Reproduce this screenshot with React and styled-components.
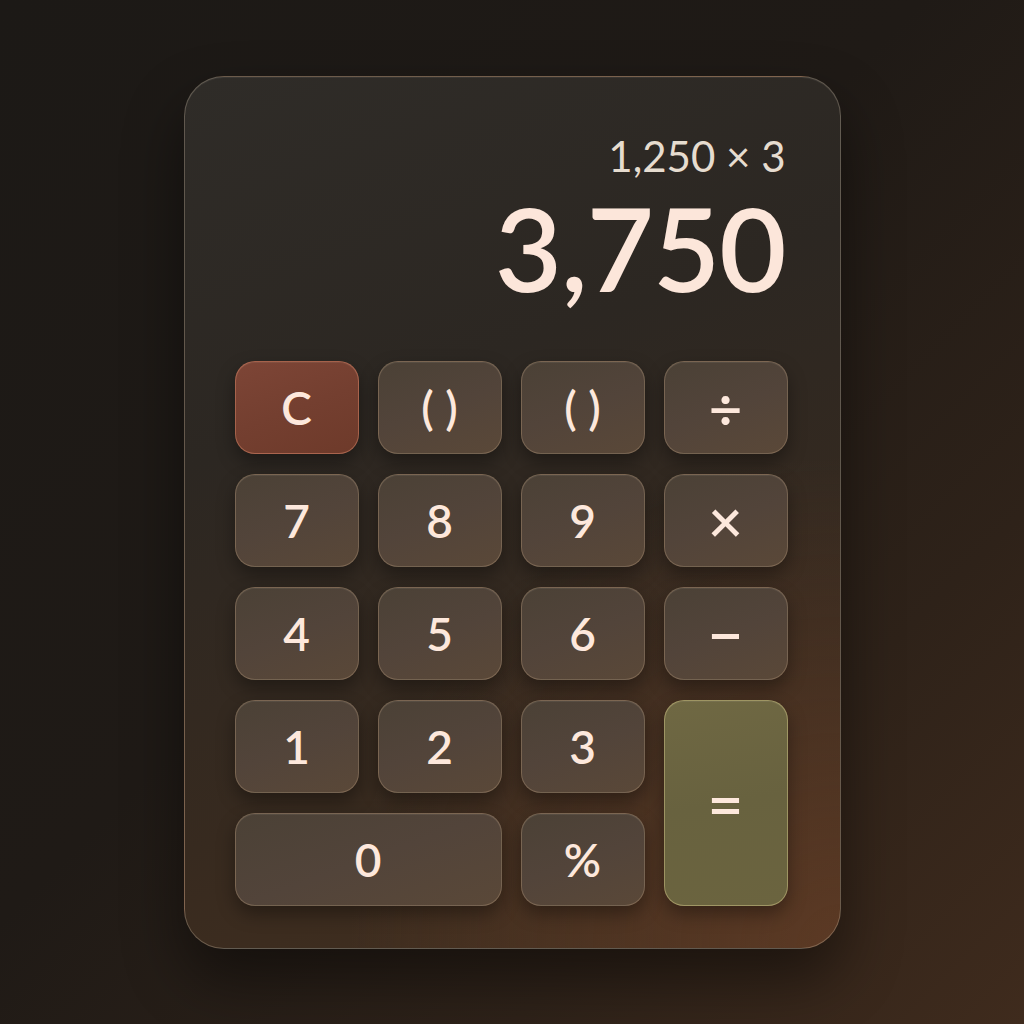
import React from "react";
import styled, { createGlobalStyle, css } from "styled-components";

const GlobalStyle = createGlobalStyle`
  html, body {
    margin: 0;
    padding: 0;
  }
  body {
    background: linear-gradient(135deg, #1c1916 0%, #1f1a16 45%, #2e2219 75%, #3f2b1d 100%);
    font-family: "Lato", "Inter", sans-serif;
    -webkit-font-smoothing: antialiased;
  }
`;

const Page = styled.div`
  min-height: 100vh;
  display: flex;
  align-items: center;
  justify-content: center;
`;

const Card = styled.div`
  width: 657px;
  height: 873px;
  box-sizing: border-box;
  padding: 0 51px 41px 50px;
  border-radius: 40px;
  border: 1px solid rgba(235, 215, 190, 0.28);
  background:
    radial-gradient(circle at 100% 100%, rgba(110, 65, 40, 0.55) 0%, rgba(110, 65, 40, 0) 45%),
    linear-gradient(160deg, #2f2c28 0%, #2c2722 35%, #372a1f 70%, #45301f 100%);
  box-shadow: 0 30px 60px rgba(0, 0, 0, 0.45), inset 0 1px 0 rgba(255, 255, 255, 0.06);
  display: flex;
  flex-direction: column;
`;

const Display = styled.div`
  display: flex;
  flex-direction: column;
  align-items: flex-end;
  gap: 13px;
  padding: 58px 3px 0 0;
  margin-bottom: 55px;
`;

const Expression = styled.div`
  font-size: 42px;
  line-height: 42px;
  font-weight: 400;
  color: #e6dccf;
`;

const Result = styled.div`
  font-size: 116px;
  line-height: 116px;
  font-weight: 600;
  color: #fce6da;
  letter-spacing: -1px;
`;

const Keypad = styled.div`
  display: grid;
  grid-template-columns: repeat(4, 124px);
  grid-auto-rows: 93px;
  column-gap: 19px;
  row-gap: 20px;
`;

const variants = {
  num: css`
    background: linear-gradient(160deg, #4b4136 0%, #52443a 50%, #5a4838 100%);
    border-color: rgba(190, 160, 130, 0.35);
  `,
  clear: css`
    background: linear-gradient(160deg, #7d4536 0%, #743f30 50%, #6e3a2a 100%);
    border-color: rgba(210, 130, 100, 0.55);
  `,
  equals: css`
    background: linear-gradient(170deg, #6f6843 0%, #68623f 50%, #6b643f 100%);
    border-color: rgba(200, 190, 130, 0.55);
  `,
};

const Key = styled.button`
  all: unset;
  box-sizing: border-box;
  display: flex;
  align-items: center;
  justify-content: center;
  border-radius: 20px;
  border: 1.5px solid;
  font-family: "Lato", "Inter", sans-serif;
  font-size: ${(p) => p.$size || 46}px;
  font-weight: 600;
  color: #fde8dc;
  box-shadow: 0 8px 18px rgba(0, 0, 0, 0.35), inset 0 1px 0 rgba(255, 255, 255, 0.06);
  grid-column: ${(p) => p.$col || "auto"};
  grid-row: ${(p) => p.$row || "auto"};
  ${(p) => variants[p.$kind || "num"]}
`;

const keys = [
  { label: "C", kind: "clear", size: 46 },
  { label: "( )", size: 46 },
  { label: "( )", size: 46 },
  { label: "÷", size: 58 },
  { label: "7" },
  { label: "8" },
  { label: "9" },
  { label: "×", size: 60 },
  { label: "4" },
  { label: "5" },
  { label: "6" },
  { label: "−", size: 62 },
  { label: "1" },
  { label: "2" },
  { label: "3" },
  { label: "=", kind: "equals", row: "span 2", size: 62 },
  { label: "0", col: "span 2" },
  { label: "%", size: 46 },
];

export default function App() {
  return (
    <Page>
      <GlobalStyle />
      <Card>
        <Display>
          <Expression>1,250 × 3</Expression>
          <Result>3,750</Result>
        </Display>
        <Keypad>
          {keys.map((k, i) => (
            <Key key={i} $kind={k.kind} $col={k.col} $row={k.row} $size={k.size}>
              {k.label}
            </Key>
          ))}
        </Keypad>
      </Card>
    </Page>
  );
}
